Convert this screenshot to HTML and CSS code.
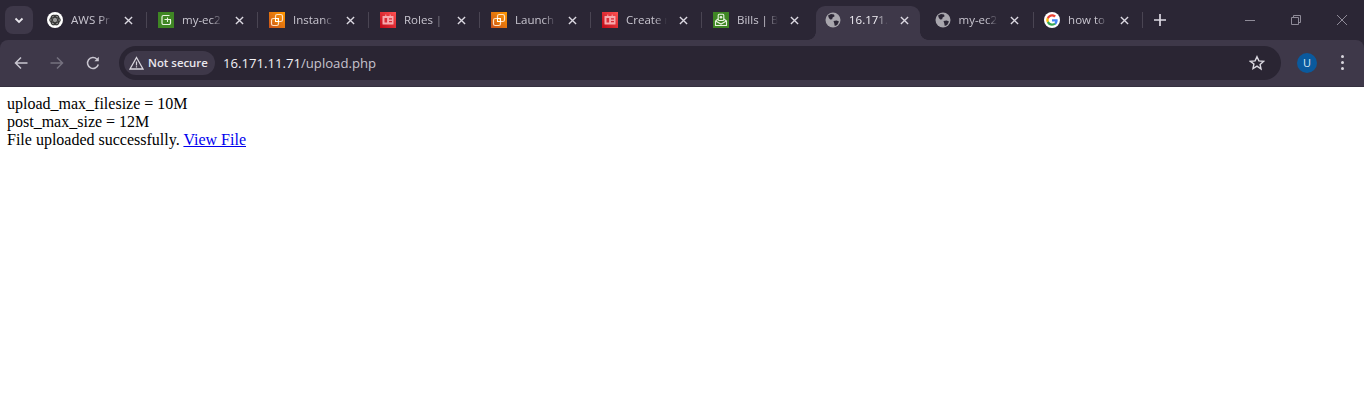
FILE: index.html
```html
<!DOCTYPE html>
<html lang="en">
<head>
<meta charset="utf-8">
<title>16.171.11.71/upload.php</title>
<link rel="stylesheet" href="styles.css">
</head>
<body>
<svg class="defs" width="0" height="0" aria-hidden="true">
  <defs>
    <linearGradient id="rg" x1="0" y1="1" x2="1" y2="0"><stop offset="0" stop-color="#bd0816"/><stop offset="1" stop-color="#ff5252"/></linearGradient>
    <linearGradient id="og" x1="0" y1="1" x2="1" y2="0"><stop offset="0" stop-color="#c8511b"/><stop offset="1" stop-color="#ff9900"/></linearGradient>
    <symbol id="x" viewBox="0 0 10 10"><path d="M1 1l8 8M9 1l-8 8" fill="none" stroke="currentColor" stroke-width="1.500"/></symbol>
    <symbol id="globe" viewBox="0 0 16 16"><circle cx="8" cy="8" r="7.500" fill="#a8a6ad"/><path d="M3 3.500l3-1.600 3 .6.6 1.800-2 1.200-.4 1.800-2 .2-1.300-1.400zM8.500 9l3.200-.6 2.300 1.200-1.800 3.400-2.400.9-.6-2.600z" fill="#2b2635"/></symbol>
    <symbol id="red" viewBox="0 0 16 16"><rect width="16" height="16" fill="url(#rg)"/><rect x="2.500" y="4" width="11" height="8.500" rx=".6" fill="#f7a9ad"/><rect x="4.500" y="6" width="2.600" height="4.500" fill="#d92c36"/><path d="M9 6.800h3M9 9.600h3" stroke="#d92c36" stroke-width="1.200"/><path d="M5.800 2.500v2M10.200 2.500v2" stroke="#f7a9ad" stroke-width="1"/></symbol>
    <symbol id="orange" viewBox="0 0 16 16"><rect width="16" height="16" fill="url(#og)"/><rect x="6.500" y="2.500" width="7" height="7" rx="1.800" fill="none" stroke="#ffe3c4" stroke-width="1.200"/><rect x="2.500" y="6.500" width="7" height="7" rx="1.800" fill="url(#og)" stroke="#ffe3c4" stroke-width="1.200"/><rect x="6.500" y="6.500" width="3" height="3" fill="none" stroke="#fff" stroke-width="1"/></symbol>
  </defs>
</svg>

<header class="chrome">
  <div class="tabstrip">
    <button class="tab-search" aria-label="Search tabs">
      <svg width="10" height="7" viewBox="0 0 10 7"><path d="M1.500 1.500L5 5l3.500-3.500" fill="none" stroke="#e8e6ec" stroke-width="1.800"/></svg>
    </button>
    <div class="tabs">
      <div class="tab">
        <svg class="fav" viewBox="0 0 16 16"><circle cx="8" cy="8" r="8" fill="#fff"/><circle cx="8" cy="8" r="5.600" fill="#9a9a9a"/><g fill="none" stroke="#333" stroke-width=".9"><ellipse cx="8" cy="8" rx="5.200" ry="2.600"/><ellipse cx="8" cy="8" rx="5.200" ry="2.600" transform="rotate(60 8 8)"/><ellipse cx="8" cy="8" rx="5.200" ry="2.600" transform="rotate(120 8 8)"/></g></svg>
        <span class="title">AWS Pr</span>
        <svg class="close"><use href="#x"/></svg>
      </div>
      <div class="tab">
        <svg class="fav" viewBox="0 0 16 16"><rect width="16" height="16" fill="#3f8624"/><path d="M11.500 3.500H5.500a1.500 1.500 0 0 0-1.500 1.500v6a1.500 1.500 0 0 0 1.500 1.500h5.500a1.500 1.500 0 0 0 1.500-1.500V8" fill="none" stroke="#e8f3e0" stroke-width="1.200"/><path d="M6.500 7.500h6.500M9.500 5.500v4.500" stroke="#e8f3e0" stroke-width="1.100"/></svg>
        <span class="title">my-ec2</span>
        <svg class="close"><use href="#x"/></svg>
      </div>
      <div class="tab">
        <svg class="fav"><use href="#orange"/></svg>
        <span class="title">Instanc</span>
        <svg class="close"><use href="#x"/></svg>
      </div>
      <div class="tab">
        <svg class="fav"><use href="#red"/></svg>
        <span class="title">Roles | I</span>
        <svg class="close"><use href="#x"/></svg>
      </div>
      <div class="tab">
        <svg class="fav"><use href="#orange"/></svg>
        <span class="title">Launch</span>
        <svg class="close"><use href="#x"/></svg>
      </div>
      <div class="tab">
        <svg class="fav"><use href="#red"/></svg>
        <span class="title">Create r</span>
        <svg class="close"><use href="#x"/></svg>
      </div>
      <div class="tab no-sep">
        <svg class="fav" viewBox="0 0 16 16"><rect width="16" height="16" fill="#3f8624"/><path d="M2.500 9v4.500h11V9l-2.500-2M2.500 9L5 7M2.500 9L8 12l5.500-3" fill="none" stroke="#e8f3e0" stroke-width="1.100"/><rect x="5.200" y="2.200" width="5.600" height="6.300" rx="1" fill="none" stroke="#e8f3e0" stroke-width="1.100"/><circle cx="8" cy="5.300" r="1.300" fill="#e8f3e0"/></svg>
        <span class="title">Bills | Bi</span>
        <svg class="close"><use href="#x"/></svg>
      </div>
      <div class="tab active">
        <svg class="fav"><use href="#globe"/></svg>
        <span class="title">16.171.</span>
        <svg class="close"><use href="#x"/></svg>
      </div>
      <div class="tab narrow">
        <svg class="fav"><use href="#globe"/></svg>
        <span class="title">my-ec2</span>
        <svg class="close"><use href="#x"/></svg>
      </div>
      <div class="tab narrow">
        <svg class="fav" viewBox="0 0 16 16"><circle cx="8" cy="8" r="8" fill="#fff"/><g transform="translate(8 8) scale(1.450) translate(-8 -8)"><path d="M11.900 8.300c0-.3 0-.6-.1-.8H8v1.500h2.200c-.1.500-.4.900-.8 1.200l1.300 1c.7-.7 1.200-1.700 1.200-2.900z" fill="#4285f4"/><path d="M8 12c1.100 0 2-.4 2.700-1l-1.300-1c-.4.200-.8.400-1.400.400-1 0-1.900-.7-2.200-1.700l-1.300 1C5.200 11.100 6.500 12 8 12z" fill="#34a853"/><path d="M5.800 8.700c-.2-.5-.2-1 0-1.400l-1.300-1c-.6 1.100-.6 2.300 0 3.400z" fill="#fbbc05"/><path d="M8 5.600c.6 0 1.100.2 1.500.6l1.200-1.200C10 4.400 9 4 8 4 6.500 4 5.200 4.900 4.500 6.300l1.300 1C6.100 6.300 7 5.600 8 5.600z" fill="#ea4335"/></g></svg>
        <span class="title">how to</span>
        <svg class="close"><use href="#x"/></svg>
      </div>
    </div>
    <button class="new-tab" aria-label="New tab">
      <svg width="12" height="12" viewBox="0 0 12 12"><path d="M6 0v12M0 6h12" stroke="#dcd9e2" stroke-width="1.700"/></svg>
    </button>
    <div class="window-controls">
      <span class="wc"><svg width="10" height="10" viewBox="0 0 10 10"><path d="M0 5.500h10" stroke="#8f8b98"/></svg></span>
      <span class="wc"><svg width="10" height="10" viewBox="0 0 10 10"><path d="M.5 2.500h7v7h-7zM2.500 2.500V.5h7v7h-2" fill="none" stroke="#8f8b98"/></svg></span>
      <span class="wc"><svg width="10" height="10" viewBox="0 0 10 10"><path d="M0 0l10 10M10 0L0 10" stroke="#8f8b98"/></svg></span>
    </div>
  </div>

  <div class="toolbar">
    <button class="nav" aria-label="Back"><svg width="14" height="14" viewBox="0 0 14 14"><path d="M13.500 7H1.500M7 1.500L1.500 7 7 12.500" fill="none" stroke="#c9c6d0" stroke-width="1.500"/></svg></button>
    <button class="nav" aria-label="Forward"><svg width="14" height="14" viewBox="0 0 14 14"><path d="M.5 7h12M7 1.500L12.500 7 7 12.500" fill="none" stroke="#75717f" stroke-width="1.500"/></svg></button>
    <button class="nav" aria-label="Reload"><svg width="14" height="14" viewBox="0 0 14 14"><path d="M12.300 8.500A5.500 5.500 0 1 1 11 3.200" fill="none" stroke="#c9c6d0" stroke-width="1.500"/><path d="M12.800 .8v4.400H8.400z" fill="#c9c6d0"/></svg></button>
    <div class="omnibox">
      <div class="chip">
        <svg width="15" height="14" viewBox="0 0 15 14"><path d="M7.500 1.500L14 13H1z" fill="none" stroke="#d8d5dd" stroke-width="1.300"/><path d="M7.500 5.500v4M7.500 10.300v1.300" stroke="#d8d5dd" stroke-width="1.200"/></svg>
        <span>Not secure</span>
      </div>
      <div class="url"><span class="host">16.171.11.71</span><span class="path">/upload.php</span></div>
      <svg class="star" width="16" height="16" viewBox="0 0 16 16"><path d="M8 1.700l1.900 4.200 4.600.5-3.400 3.100.9 4.500L8 11.200l-4 2.300.9-4.500L1.500 6.400l4.600-.5z" fill="none" stroke="#dcd9e2" stroke-width="1.400"/></svg>
    </div>
    <div class="avatar">U</div>
    <div class="menu" aria-label="Menu"><i></i><i></i><i></i></div>
  </div>
</header>

<main class="page">
  upload_max_filesize = 10M<br>
  post_max_size = 12M<br>
  File uploaded successfully. <a href="#">View File</a>
</main>
</body>
</html>
```

FILE: styles.css
```css
* { box-sizing: border-box; }
html, body { margin: 0; padding: 0; background: #fff; overflow: hidden; }
.defs { display: block; height: 0; }
button { border: 0; padding: 0; background: none; }

.chrome { font-family: "Open Sans", "Noto Sans", sans-serif; background: #2b2635; height: 87px; }

.tabstrip { display: flex; align-items: flex-start; height: 40px; padding: 6px 0 0 5px; }
.tab-search { width: 28px; height: 28px; border-radius: 8px; background: #3e3849; display: flex; align-items: center; justify-content: center; flex: none; }
.tabs { display: flex; margin-left: 3px; flex: none; }
.tab { position: relative; width: 111px; height: 34px; display: flex; align-items: center; padding: 0 14.500px 6px 11px; color: #c9c6d0; flex: none; }
.tab::after { content: ""; position: absolute; right: 0; top: 6px; width: 1px; height: 16px; background: #4a4553; }
.tab.no-sep::after { display: none; }
.tab.narrow { width: 109.600px; padding-left: 10.500px; }
.fav { width: 16px; height: 16px; flex: none; display: block; }
.title { flex: 1; min-width: 0; margin-left: 8px; font-size: 11.500px; line-height: 16px; white-space: nowrap; -webkit-mask-image: linear-gradient(90deg, #000 70%, transparent 100%); mask-image: linear-gradient(90deg, #000 70%, transparent 100%); }
.close { width: 9px; height: 9px; margin-left: 12px; flex: none; color: #dcd9e2; }

.tab.active { color: #f1eff5; padding: 0 15.500px 6px 12px; }
.tab.active::before { content: ""; position: absolute; left: 3px; right: 4px; top: 0; bottom: 0; background: #3e3849; border-radius: 9px 9px 0 0; }
.tab.active::after { left: -5px; right: -4px; top: auto; bottom: 0; width: auto; height: 8px; background:
  radial-gradient(circle at 0 0, transparent 7.500px, #3e3849 8px) left bottom / 8px 8px no-repeat,
  radial-gradient(circle at 100% 0, transparent 7.500px, #3e3849 8px) right bottom / 8px 8px no-repeat; }
.tab.active > * { position: relative; }

.new-tab { width: 28px; height: 28px; margin-left: 3px; display: flex; align-items: center; justify-content: center; flex: none; }
.window-controls { margin-left: auto; display: flex; margin-top: -6px; margin-right: -1px; }
.wc { width: 46px; height: 40px; display: flex; align-items: center; justify-content: center; }

.toolbar { height: 47px; background: #3e3849; border-radius: 8px 8px 0 0; display: flex; align-items: center; padding: 0 0 1px 3px; border-bottom: 1px solid #35303f; }
.nav { width: 36px; height: 36px; display: flex; align-items: center; justify-content: center; flex: none; }
.omnibox { flex: 1; height: 34px; margin-left: 8px; border-radius: 17px; background: #2a2533; display: flex; align-items: center; padding: 0 16px 0 5px; min-width: 0; }
.chip { height: 24px; width: 91px; border-radius: 12px; background: #3e3849; display: flex; align-items: center; padding-left: 5px; gap: 4px; color: #e8e6ec; font-size: 11.400px; font-weight: 600; flex: none; white-space: nowrap; }
.url { flex: 1; margin-left: 8px; font-size: 13.150px; white-space: nowrap; }
.host { color: #f3f1f6; }
.path { color: #c8c4cf; }
.star { flex: none; }
.avatar { flex: none; width: 20px; height: 20px; margin-left: 16px; border-radius: 50%; background: #0a5a9e; color: #dfeaf5; font-size: 11px; line-height: 20px; text-align: center; }
.menu { flex: none; width: 3px; margin-left: 24px; margin-right: 20px; display: flex; flex-direction: column; gap: 3px; }
.menu i { display: block; width: 3px; height: 3px; border-radius: 50%; background: #d8d5dd; }

.page { margin: 8px 7px; font-family: "Liberation Serif", serif; font-size: 16px; line-height: 18px; color: #000; }
.page a { color: #00e; text-decoration: underline; }
```
